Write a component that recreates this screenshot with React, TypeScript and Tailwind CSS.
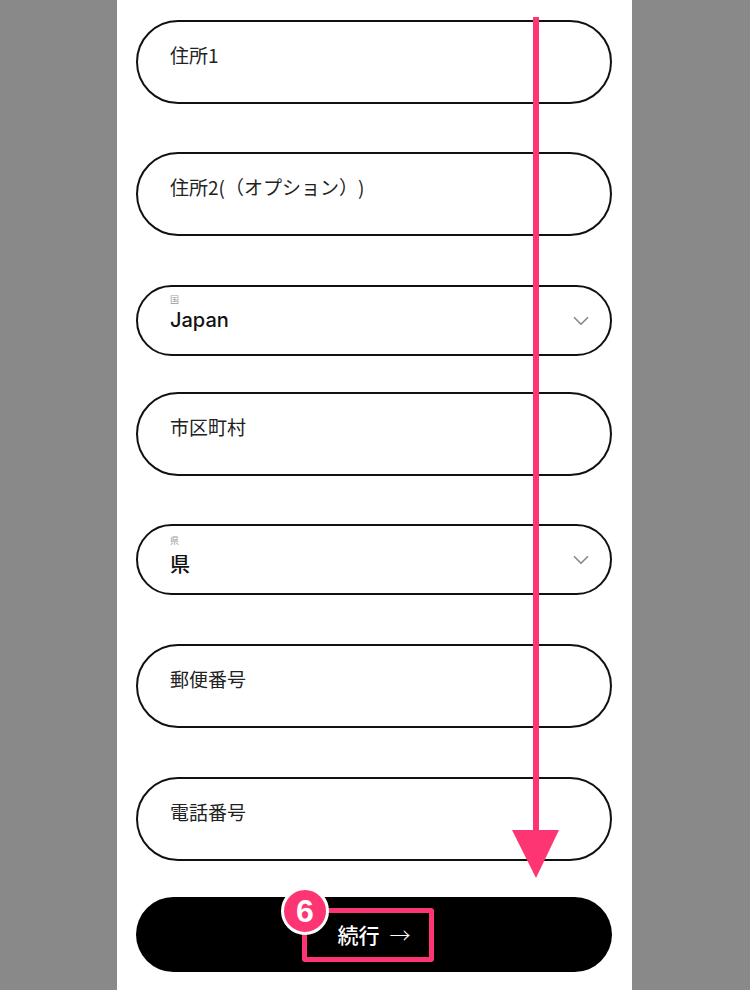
import React from 'react';
import { ChevronDown } from 'lucide-react';

const jp = { fontFamily: '"Noto Sans CJK JP", "Noto Sans", sans-serif' };

interface TextFieldProps {
  label: string;
  className?: string;
}

const TextField: React.FC<TextFieldProps> = ({ label, className = '' }) => (
  <div
    className={`h-[84px] rounded-full border-2 border-[#111] bg-white pl-[32px] pt-[19px] text-[19px] leading-[28px] text-[#222] [text-spacing-trim:space-all] ${className}`}
    style={jp}
  >
    {label}
  </div>
);

interface SelectFieldProps {
  label: string;
  value: string;
  valueFont?: string;
  labelClass: string;
  valueClass: string;
  className?: string;
}

const SelectField: React.FC<SelectFieldProps> = ({
  label,
  value,
  valueFont,
  labelClass,
  valueClass,
  className = '',
}) => (
  <div
    className={`flex h-[71px] justify-between rounded-full border-2 border-[#111] bg-white pl-[32px] pr-[16px] ${className}`}
  >
    <div className="flex flex-col">
      <span className={`text-[9px] leading-[10px] text-[#9a9a9a] ${labelClass}`} style={jp}>
        {label}
      </span>
      <span
        className={`text-[20px] font-medium text-[#111] ${valueClass}`}
        style={{ fontFamily: valueFont ?? jp.fontFamily }}
      >
        {value}
      </span>
    </div>
    <ChevronDown size={26} strokeWidth={1.6} className="self-center text-[#8a8a8a]" />
  </div>
);

export default function App() {
  return (
    <div className="min-h-[990px] bg-[#898989]">
      <div className="relative ml-[117px] min-h-[990px] w-[515px] overflow-hidden bg-white pl-[19px] pr-[20px] pt-[20px]">
        <TextField label="住所1" className="mb-[48px]" />
        <TextField label="住所2(（オプション）)" className="mb-[49px]" />
        <SelectField
          label="国"
          value="Japan"
          valueFont='Inter, "Noto Sans", sans-serif'
          labelClass="mt-[8px]"
          valueClass="mt-[3px] leading-[24px]"
          className="mb-[36px]"
        />
        <TextField label="市区町村" className="mb-[48px]" />
        <SelectField
          label="県"
          value="県"
          labelClass="mt-[10px]"
          valueClass="mt-[3px] leading-[29px]"
          className="mb-[49px]"
        />
        <TextField label="郵便番号" className="mb-[49px]" />
        <TextField label="電話番号" className="mb-[36px]" />
        <button
          className="flex h-[75px] w-full items-center justify-center rounded-full bg-black text-[21px] text-white"
          style={jp}
        >
          <span className="font-medium">続行</span>
          <span className="ml-[10px] font-light">→</span>
        </button>

        {/* annotation overlay */}
        <svg
          className="pointer-events-none absolute left-0 top-0"
          width={515}
          height={990}
          viewBox="0 0 515 990"
        >
          <line x1={419} y1={17} x2={419} y2={834} stroke="#fd3572" strokeWidth={6} />
          <polygon points="395,830 442,830 419,878" fill="#fd3572" />
        </svg>
        <div className="pointer-events-none absolute left-[185px] top-[908px] h-[54px] w-[132px] rounded-[3px] border-[5px] border-[#fd3572]" />
        <div
          className="pointer-events-none absolute left-[164px] top-[887px] flex h-[48px] w-[48px] items-center justify-center rounded-full border-[3px] border-white bg-[#fd3572] text-[32px] font-bold leading-none text-white"
          style={{ fontFamily: '"Liberation Sans", Arial, sans-serif' }}
        >
          6
        </div>
      </div>
    </div>
  );
}
